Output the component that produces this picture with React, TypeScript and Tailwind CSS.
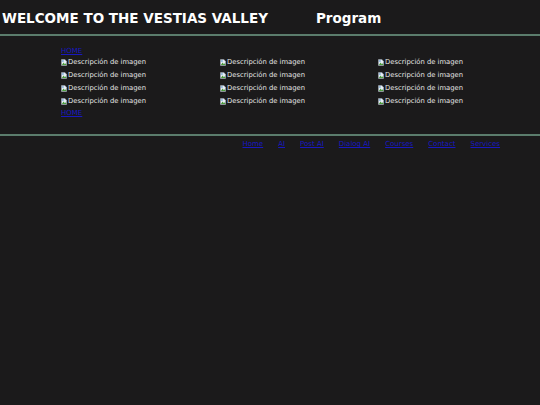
import React from 'react';

const BrokenImg = () => (
  <svg width="6" height="7" viewBox="0 0 7 8" className="inline-block mr-px">
    <path d="M0.5 0.5h4l2 2v5h-6z" fill="#e8eef4" stroke="#9aa4ae" strokeWidth="0.6" />
    <path d="M1 7l2-3 1.5 2 1-1 1 2z" fill="#4a9a3a" />
    <rect x="1.2" y="1.5" width="2" height="1.5" fill="#6aa0d8" />
  </svg>
);

function Cell() {
  return (
    <div className="flex items-center text-[6.8px] leading-[13px] text-[#e6e6e6]">
      <BrokenImg />
      <span>Descripción de imagen</span>
    </div>
  );
}

export default function App() {
  const nav = ['Home', 'AI', 'Post AI', 'Dialog AI', 'Courses', 'Contact', 'Services'];
  return (
    <div className="w-[540px] h-[405px] bg-[#1b1a1b] font-['DejaVu_Sans',Verdana,sans-serif] overflow-hidden">
      <header className="flex items-center h-[34px] pl-[2px] pt-[2px]">
        <h1 className="text-[13.5px] font-bold text-white">WELCOME TO THE VESTIAS VALLEY</h1>
        <span className="ml-[48px] text-[13.5px] font-bold text-white">Program</span>
      </header>
      <div className="h-[2px] bg-[#5b7c6c]" />
      <section className="pl-[61px] pt-[10px] pb-[16px]">
        <a href="#" className="block text-[7px] leading-[10px] text-[#1818c0] underline">HOME</a>
        <div className="grid grid-cols-[159px_158px_158px]">
          {Array.from({ length: 12 }).map((_, i) => (
            <Cell key={i} />
          ))}
        </div>
        <a href="#" className="block text-[7px] leading-[10px] text-[#1818c0] underline">HOME</a>
      </section>
      <div className="h-[2px] bg-[#5b7c6c]" />
      <nav className="flex justify-end gap-[15px] pr-[40px] pt-[2px]">
        {nav.map((n) => (
          <a key={n} href="#" className="text-[7px] leading-[12px] text-[#1818c0] underline">{n}</a>
        ))}
      </nav>
    </div>
  );
}
